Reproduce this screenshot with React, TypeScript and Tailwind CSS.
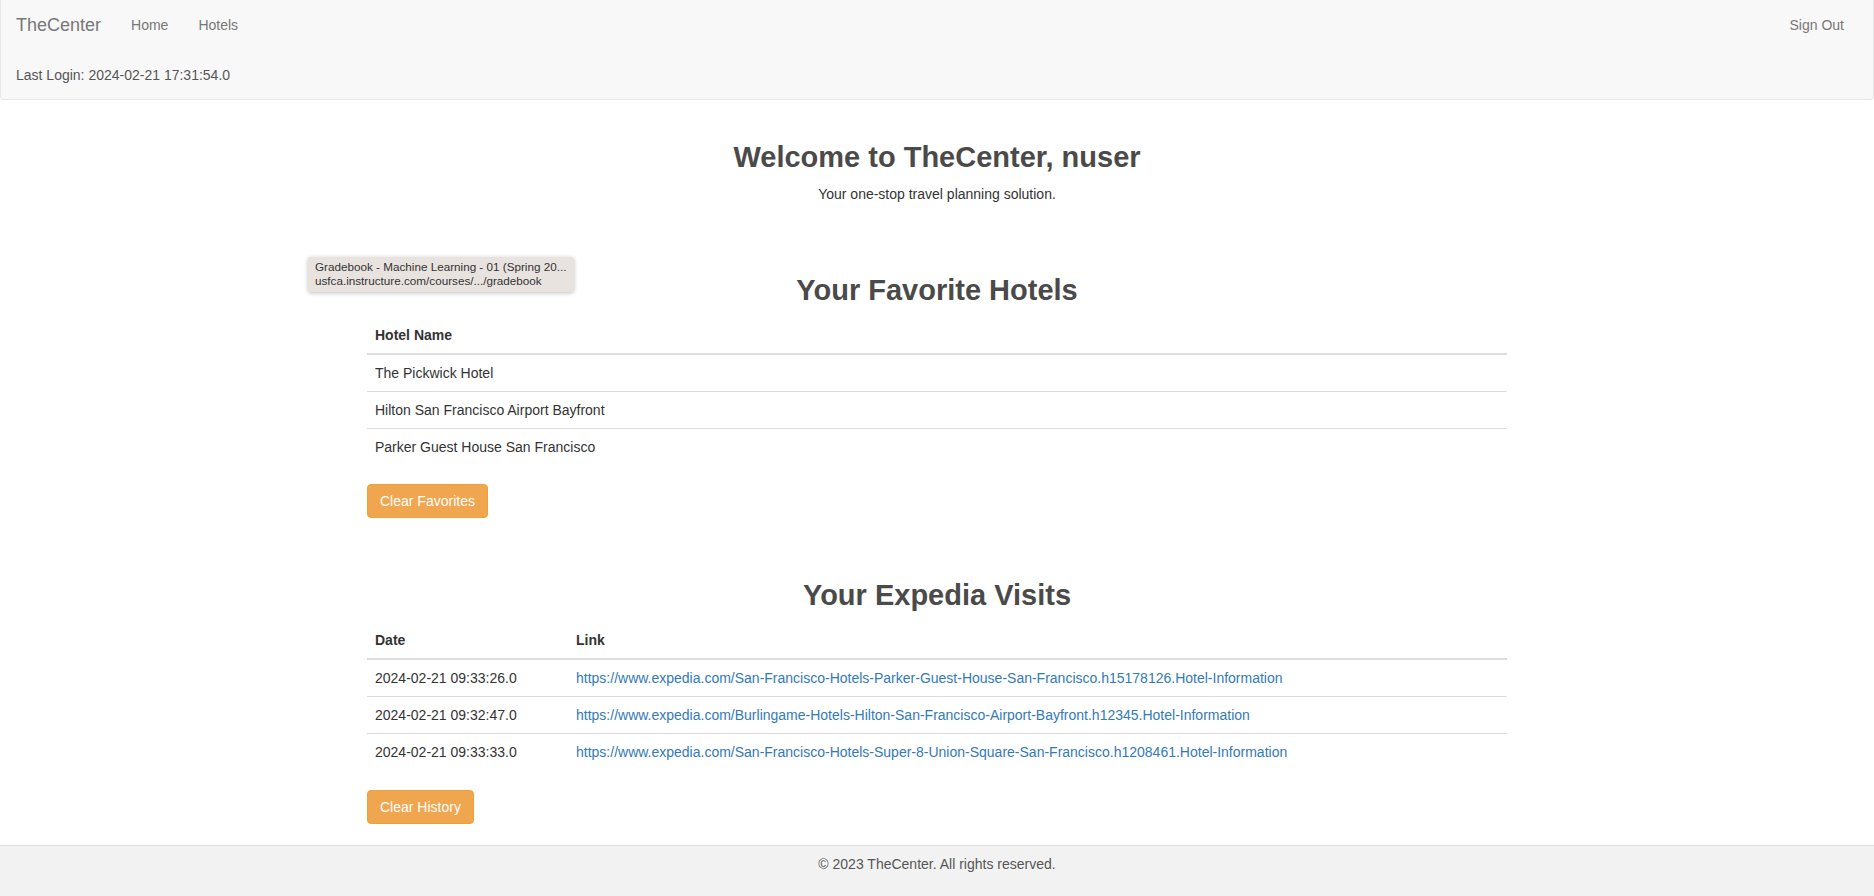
import React from "react";

const hotels = [
  "The Pickwick Hotel",
  "Hilton San Francisco Airport Bayfront",
  "Parker Guest House San Francisco",
];

const visits = [
  {
    date: "2024-02-21 09:33:26.0",
    link: "https://www.expedia.com/San-Francisco-Hotels-Parker-Guest-House-San-Francisco.h15178126.Hotel-Information",
  },
  {
    date: "2024-02-21 09:32:47.0",
    link: "https://www.expedia.com/Burlingame-Hotels-Hilton-San-Francisco-Airport-Bayfront.h12345.Hotel-Information",
  },
  {
    date: "2024-02-21 09:33:33.0",
    link: "https://www.expedia.com/San-Francisco-Hotels-Super-8-Union-Square-San-Francisco.h1208461.Hotel-Information",
  },
];

export default function App() {
  return (
    <div
      className="min-h-[896px] bg-white text-[14px] leading-[20px] text-[#333] flex flex-col"
      style={{ fontFamily: '"Liberation Sans", Arial, Helvetica, sans-serif' }}
    >
      {/* Navbar */}
      <nav className="bg-[#f8f8f8] border border-t-0 border-[#e7e7e7] rounded-b-[4px] h-[100px] flex flex-col">
        <div className="h-[50px] flex items-center justify-between">
          <div className="flex items-center">
            <span className="px-[15px] text-[18px] leading-[20px] text-[#777]">TheCenter</span>
            <span className="px-[15px] text-[#777]">Home</span>
            <span className="px-[15px] text-[#777]">Hotels</span>
          </div>
          <span className="px-[15px] mr-[14px] text-[#777]">Sign Out</span>
        </div>
        <div className="h-[49px] flex items-center px-[15px] text-[#555]">
          Last Login: 2024-02-21 17:31:54.0
        </div>
      </nav>

      {/* Main */}
      <main className="relative w-[1170px] mx-auto px-[15px] flex-1">
        <div className="text-center pt-[37px]">
          <h1 className="text-[29px] leading-[40px] font-bold text-[#4a4a4a]">
            Welcome to TheCenter, nuser
          </h1>
          <p className="mt-[7px] text-[#333]">Your one-stop travel planning solution.</p>
        </div>

        <h2 className="mt-[70px] mb-[10px] text-center text-[29px] leading-[33px] font-bold text-[#4a4a4a]">
          Your Favorite Hotels
        </h2>
        <table className="w-full border-collapse mb-[19px]">
          <thead>
            <tr>
              <th className="text-left font-bold px-[8px] py-[8px] border-b-2 border-[#ddd]">Hotel Name</th>
            </tr>
          </thead>
          <tbody>
            {hotels.map((h, i) => (
              <tr key={h}>
                <td className={`px-[8px] py-[8px] ${i > 0 ? "border-t border-[#ddd]" : ""}`}>{h}</td>
              </tr>
            ))}
          </tbody>
        </table>
        <button className="h-[34px] px-[12px] bg-[#f0a54f] border border-[#eea236] rounded-[4px] text-white">
          Clear Favorites
        </button>

        <h2 className="mt-[61px] mb-[10px] text-center text-[29px] leading-[33px] font-bold text-[#4a4a4a]">
          Your Expedia Visits
        </h2>
        <table className="w-full border-collapse mb-[20px]">
          <thead>
            <tr>
              <th className="w-[201px] text-left font-bold px-[8px] py-[8px] border-b-2 border-[#ddd]">Date</th>
              <th className="text-left font-bold px-[8px] py-[8px] border-b-2 border-[#ddd]">Link</th>
            </tr>
          </thead>
          <tbody>
            {visits.map((v, i) => (
              <tr key={v.date}>
                <td className={`px-[8px] py-[8px] ${i > 0 ? "border-t border-[#ddd]" : ""}`}>{v.date}</td>
                <td className={`px-[8px] py-[8px] ${i > 0 ? "border-t border-[#ddd]" : ""}`}>
                  <a href="#" className="text-[#337ab7]">{v.link}</a>
                </td>
              </tr>
            ))}
          </tbody>
        </table>
        <button className="h-[34px] px-[12px] bg-[#f0a54f] border border-[#eea236] rounded-[4px] text-white">
          Clear History
        </button>

        {/* Link hover tooltip */}
        <div className="absolute left-[-44px] top-[157px] w-[266px] h-[35px] bg-[#e9e3e0] rounded-[3px] shadow-[0_1px_4px_rgba(0,0,0,0.25)] px-[7px] pt-[3px] text-[11.7px] leading-[14px] text-[#333]">
          <div>Gradebook - Machine Learning - 01 (Spring 20...</div>
          <div>usfca.instructure.com/courses/.../gradebook</div>
        </div>
      </main>

      {/* Footer */}
      <footer className="mt-[18px] h-[51px] bg-[#f2f2f2] border-t border-[#ddd] text-center pt-[8px] text-[#555]">
        © 2023 TheCenter. All rights reserved.
      </footer>
    </div>
  );
}
